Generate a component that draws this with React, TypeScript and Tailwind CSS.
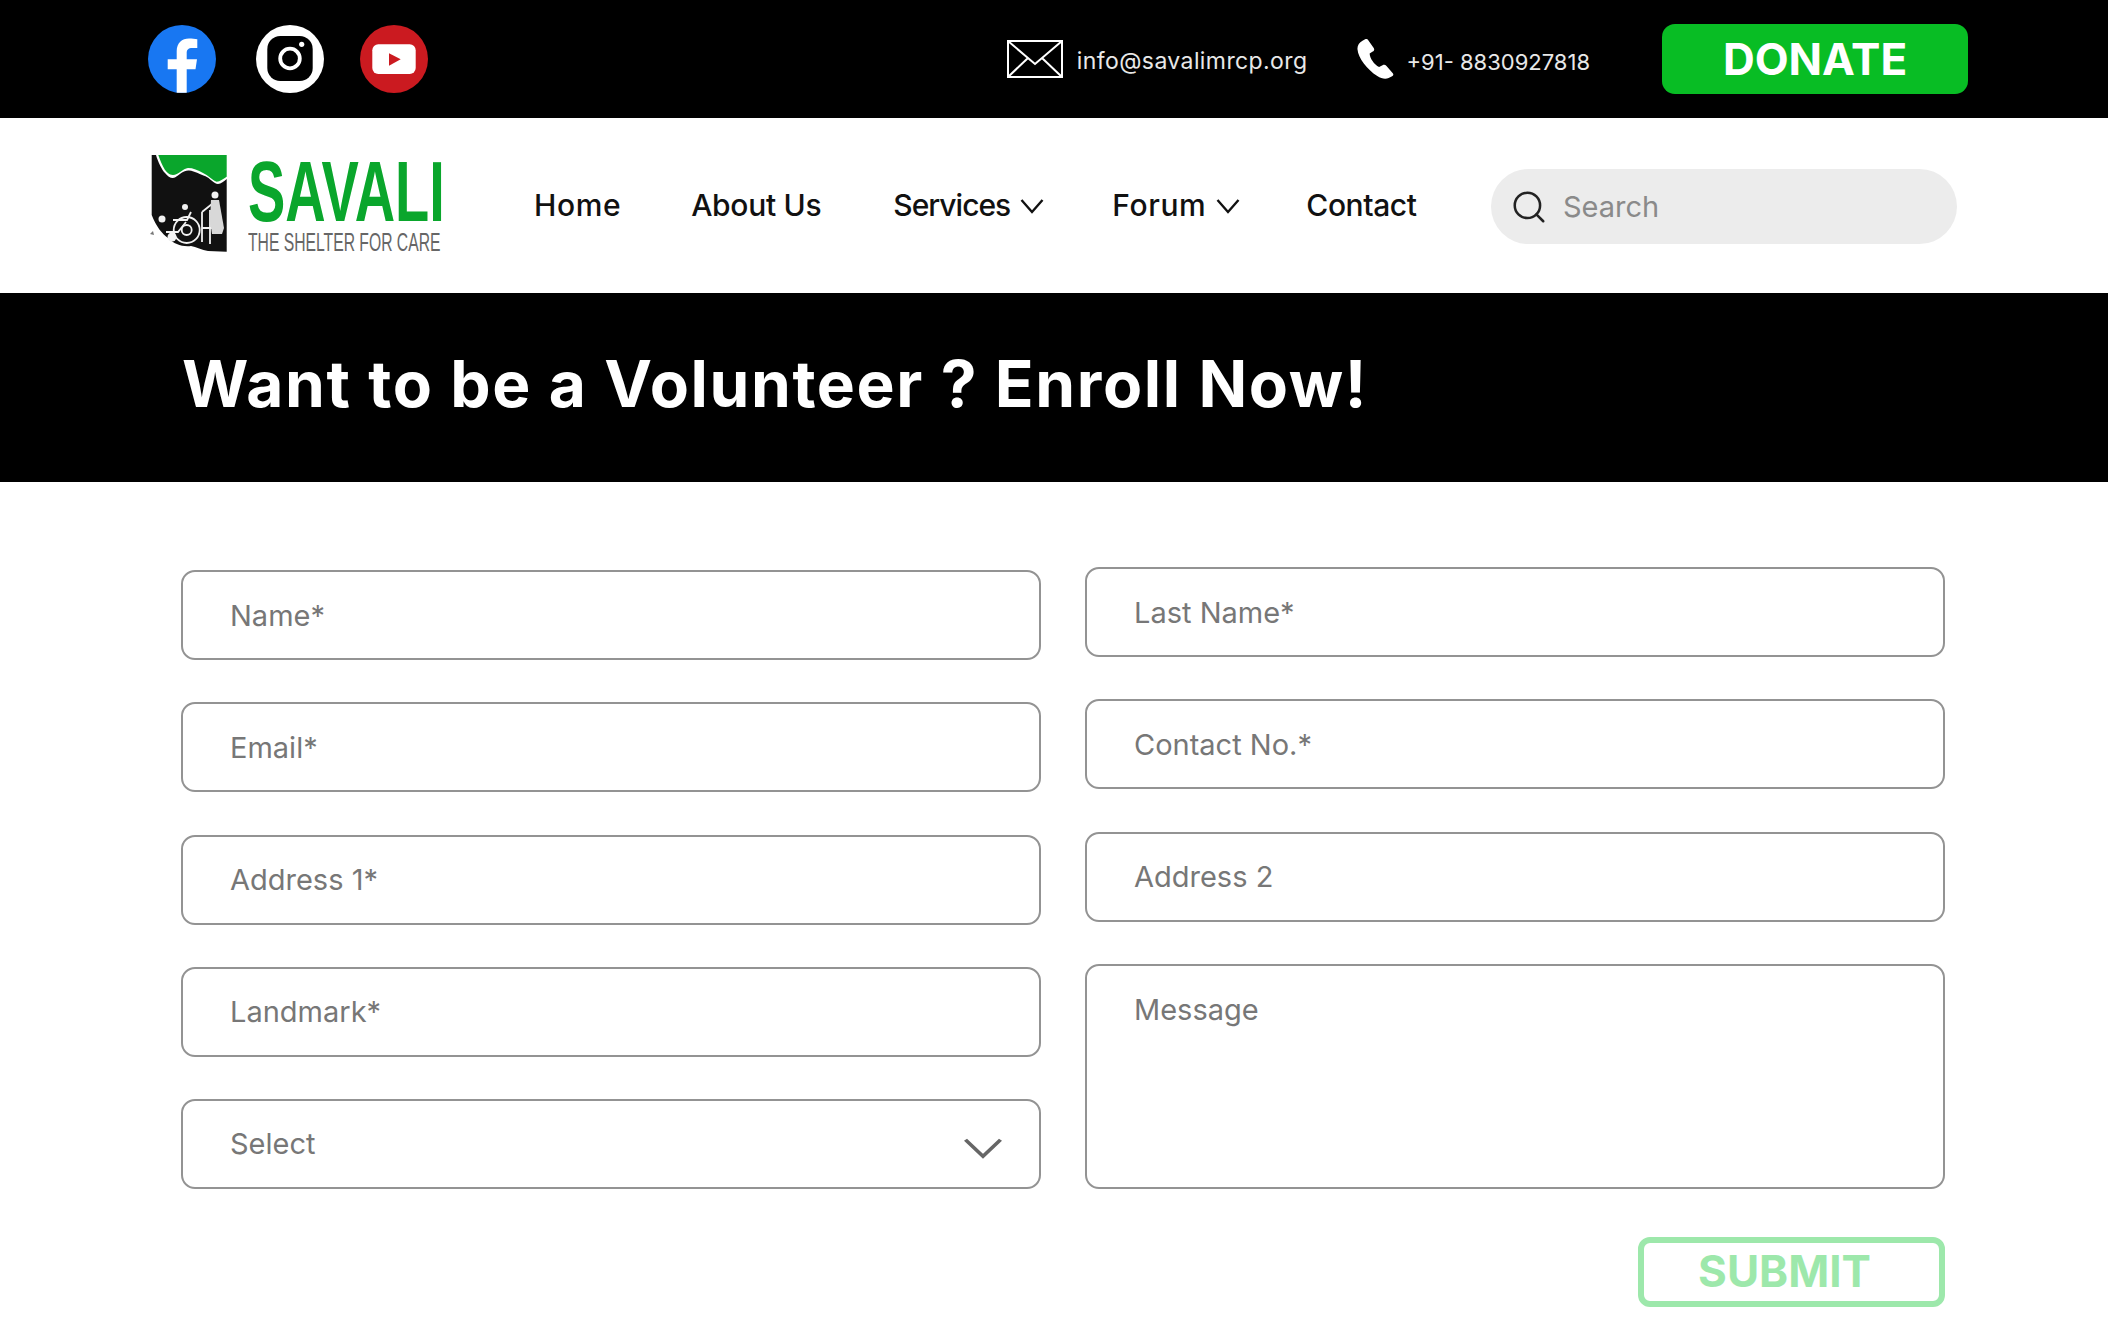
import React from 'react';
import { Search } from 'lucide-react';

const font = { fontFamily: 'Inter, "Noto Sans", sans-serif' };

function Facebook() {
  return (
    <svg width="68" height="68" viewBox="0 0 68 68">
      <circle cx="34" cy="34" r="34" fill="#1877f2" />
      <path
        d="M28.7 67.8V44.3H19.7V34.3H28.7V26C28.7 18 34 13.5 41 13.5C44 13.5 47 14 49.3 14.3V23H44.5C40 23 38.7 25 38.7 28V34.3H49L47.5 44.3H38.7V67.8Z"
        fill="#fff"
      />
    </svg>
  );
}

function Instagram() {
  return (
    <svg width="68" height="68" viewBox="0 0 68 68">
      <circle cx="34" cy="34" r="34" fill="#fff" />
      <rect x="11.3" y="11" width="45.4" height="45" rx="13" fill="#000" />
      <circle cx="34" cy="33.5" r="9.8" fill="none" stroke="#fff" strokeWidth="3.8" />
      <circle cx="45.7" cy="19.3" r="2.6" fill="#fff" />
    </svg>
  );
}

function Youtube() {
  return (
    <svg width="68" height="68" viewBox="0 0 68 68">
      <circle cx="34" cy="34" r="34" fill="#cb1a20" />
      <rect x="12.3" y="19.3" width="43.4" height="29.7" rx="6" fill="#fff" />
      <path d="M29 28.3V40.7L40.7 34.3Z" fill="#cb1a20" />
    </svg>
  );
}

function Envelope() {
  return (
    <svg width="56" height="38" viewBox="0 0 56 38" fill="none" stroke="#fff" strokeWidth="2">
      <rect x="1" y="1" width="54" height="36" />
      <path d="M1 1L28 24L55 1M1 37L21 18M55 37L35 18" />
    </svg>
  );
}

function PhoneGlyph() {
  return (
    <svg width="37" height="40" viewBox="0 0 31 40" preserveAspectRatio="none" fill="#fff">
      <path d="M9 0.5L14 9C14.8 10.5 14.4 11.6 13.2 12.6L10.6 14.4C10.6 19 14.4 25.5 18.5 28L21.4 26.2C22.6 25.5 23.8 25.7 24.7 26.9L30 34.2C30.8 35.4 30.5 36.4 29.4 37.2L26.5 39C24 40.2 20.5 39.8 17 37C8.5 30.5 1 19 0.4 10.2C0.2 6.4 1.8 3.6 4.6 1.7L6.8 0.3C7.7 -0.2 8.5 -0.1 9 0.5Z" />
    </svg>
  );
}

function LogoMark() {
  return (
    <svg width="82" height="105" viewBox="0 0 82 105" className="mb-[6px] shrink-0">
      <path
        d="M3.7 5H8C10 12 14 20 17 23C20 27 24 29 27 27.500C31 25 36 20 41 20.500C47 21 53 25 57 26C62 28 66 34 70 34C73 34 76 31 78.700 29V101.700L60 101C54 100 48 97 43 96C34 97 26 94 20 88C14 84 8 76 3.700 65Z"
        fill="#111"
      />
      <path
        d="M10.300 5H78.700V26.700C75 29 72 31.700 68.700 31.700C64 30 60 25 55 23C50 20 45 18 40 18C35 18.500 30 25 25 25C21 25 19 22 17 20C14 15 12 10 10.300 5Z"
        fill="#0aa62c"
      />
      <g fill="none" stroke="#f2f2f2" strokeWidth="1.800">
        <circle cx="38.700" cy="80" r="13" />
        <circle cx="38.700" cy="80" r="5" />
        <path d="M25 70H39L43 62M38 72L30 82H18M54 62V92M62 60V94M54 62L64 54M54 78H70" />
      </g>
      <circle cx="14" cy="69" r="3.500" fill="#f2f2f2" />
      <circle cx="24" cy="87" r="4.500" fill="#f2f2f2" />
      <circle cx="37" cy="57" r="3" fill="#f2f2f2" />
      <circle cx="67" cy="45" r="3.500" fill="#f2f2f2" />
      <path d="M63 50H71L76 78L74 84H64L62 70Z" fill="#d8d8d8" />
      <path d="M2 84L5 81L6 85Z" fill="#777" />
    </svg>
  );
}

function Chevron({ className, strokeWidth = 2.4 }: { className?: string; strokeWidth?: number }) {
  return (
    <svg
      width="24"
      height="16"
      viewBox="0 0 24 16"
      preserveAspectRatio="none"
      fill="none"
      stroke="currentColor"
      strokeWidth={strokeWidth}
      className={className}
    >
      <path d="M1.500 2L12 14L22.500 2" />
    </svg>
  );
}

function Field({ placeholder }: { placeholder: string }) {
  return (
    <input
      placeholder={placeholder}
      className="h-[90px] w-full rounded-[14px] border-2 border-[#939393] bg-white px-[47px] text-[29px] text-[#777] outline-none placeholder:text-[#777]"
    />
  );
}

export default function App() {
  return (
    <div className="h-[1328px] bg-white" style={font}>
      {/* Top bar */}
      <div className="flex h-[118px] items-center bg-black pl-[148px] pr-[140px]">
        <div className="flex items-center">
          <Facebook />
          <div className="ml-10">
            <Instagram />
          </div>
          <div className="ml-9">
            <Youtube />
          </div>
        </div>
        <div className="ml-auto flex items-center">
          <Envelope />
          <span className="ml-[14px] mt-[5px] text-[23px] tracking-[0.4px] text-[#e8e8e8]">info@savalimrcp.org</span>
          <div className="ml-[50px]">
            <PhoneGlyph />
          </div>
          <span className="ml-[12px] mt-[6px] text-[22px] text-[#e8e8e8]">+91- 8830927818</span>
          <button className="ml-[72px] h-[70px] w-[306px] rounded-[13px] bg-[#08bd24] text-[44px] font-bold text-white">
            DONATE
          </button>
        </div>
      </div>

      {/* Nav */}
      <div className="flex h-[175px] items-center pl-[148px] pr-[151px]">
        <div className="flex w-[292px] shrink-0 items-center">
          <LogoMark />
          <div className="ml-[18px] flex flex-col whitespace-nowrap" style={{ fontFamily: '"Liberation Sans", sans-serif' }}>
            <span className="origin-left scale-x-[0.65] text-[86px] font-bold leading-[70px] text-[#0aa62c]">SAVALI</span>
            <span className="mt-[3px] origin-left scale-x-[0.628] text-[25px] leading-[26px] text-[#666]">THE SHELTER FOR CARE</span>
          </div>
        </div>
        <nav className="ml-[94px] flex items-center whitespace-nowrap text-[30px] font-medium tracking-[0.6px] text-[#111]">
          <span>Home</span>
          <span className="ml-[70px] tracking-[-0.3px]">About Us</span>
          <span className="ml-[72px] flex items-center gap-[10px] tracking-[-1px]">
            Services <Chevron />
          </span>
          <span className="ml-[68px] flex items-center gap-[10px]">
            Forum <Chevron />
          </span>
          <span className="ml-[66px] tracking-[-0.4px]">Contact</span>
        </nav>
        <div className="ml-auto mt-[2px] flex h-[75px] w-[466px] items-center rounded-full bg-[#ececec] pl-[19px]">
          <Search size={38} strokeWidth={1.6} className="text-[#222]" />
          <span className="ml-[15px] text-[29px] text-[#8a8a8a]">Search</span>
        </div>
      </div>

      {/* Banner */}
      <div className="flex h-[189px] items-center bg-black pb-[8px] pl-[182px]">
        <h1 className="text-[64px] font-bold tracking-[1.6px] text-white">Want to be a Volunteer ? Enroll Now!</h1>
      </div>

      {/* Form */}
      <div className="flex gap-[44px] pl-[181px] pr-[163px] pt-[85px]">
        <div className="flex w-[860px] flex-col gap-[42.300px] pt-[3px]">
          <Field placeholder="Name*" />
          <Field placeholder="Email*" />
          <Field placeholder="Address 1*" />
          <Field placeholder="Landmark*" />
          <div className="relative">
            <select className="h-[90px] w-full appearance-none rounded-[14px] border-2 border-[#939393] bg-white px-[47px] text-[29px] text-[#777] outline-none">
              <option>Select</option>
            </select>
            <Chevron strokeWidth={2.4} className="absolute right-[38px] top-[38px] h-[22px] w-[40px] text-[#666]" />
          </div>
        </div>
        <div className="flex w-[860px] flex-col gap-[42.300px]">
          <Field placeholder="Last Name*" />
          <Field placeholder="Contact No.*" />
          <Field placeholder="Address 2" />
          <textarea
            placeholder="Message"
            className="h-[225px] w-full resize-none rounded-[14px] border-2 border-[#939393] bg-white px-[47px] py-[22px] text-[29px] text-[#777] outline-none placeholder:text-[#777]"
          />
          <div className="mt-[6px] flex justify-end">
            <button className="flex h-[70px] w-[307px] items-center justify-center rounded-[12px] border-[6px] border-[#9de8ab] pb-[3px] pr-[14px] text-[44px] font-bold leading-none text-[#9de8ab]">
              SUBMIT
            </button>
          </div>
        </div>
      </div>
    </div>
  );
}
